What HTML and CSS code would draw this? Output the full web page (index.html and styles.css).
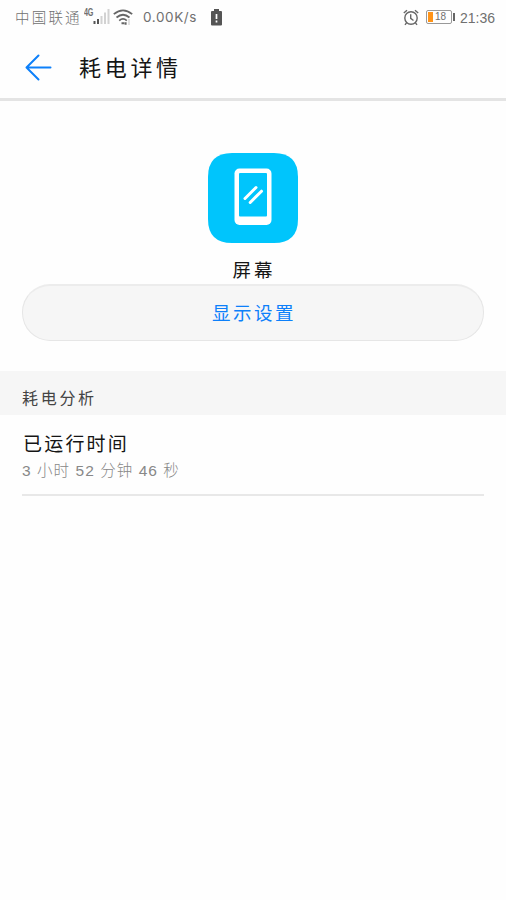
FILE: index.html
```html
<!DOCTYPE html>
<html lang="zh-CN">
<head>
<meta charset="utf-8">
<title>耗电详情</title>
<link rel="stylesheet" href="styles.css">
</head>
<body>
<div class="status">
  <span class="carrier">中国联通</span>
  <span class="network">4G</span>
  <svg class="signal" width="18" height="17" viewBox="0 0 18 17">
    <path d="M1.5 13v3M5 11v5" stroke="#555" stroke-width="2"/>
    <path d="M8.500 8v8M12 4.500v11.500M15.500 1v15" stroke="#d2d2d2" stroke-width="2"/>
  </svg>
  <svg class="wifi" width="20" height="17" viewBox="0 0 20 17" fill="none" stroke="#666" stroke-width="1.7">
    <path d="M.8 5.200Q10-2.600 19.200 5.200M3.500 8.500Q10 3 16.500 8.500M6.200 11.600Q10 8.300 13.800 11.600"/>
    <path d="M8.500 14.300h2.800M12.600 13.200v2.500" stroke-width="2"/>
    <path d="M16 10v6" stroke="#ddd"/>
  </svg>
  <span class="speed">0.00K/s</span>
  <svg class="low" width="11" height="17" viewBox="0 0 11 17">
    <path d="M3 0h5v2h2q1 0 1 1v12.500q0 1-1 1H1q-1 0-1-1V3q0-1 1-1h2z" fill="#555"/>
    <path d="M5.500 5v5M5.500 11.500v2" stroke="#fff" stroke-width="1.700"/>
  </svg>
  <svg class="alarm" width="16" height="17" viewBox="0 0 16 17" fill="none" stroke="#666" stroke-width="1.400">
    <circle cx="8" cy="9" r="6.200"/>
    <path d="M7.700 5.300v4l2.800 2.200M.8 4L4 1.200M12 1.200L15.200 4M3.500 13.800L2 15.800M12.500 13.800l1.500 2"/>
  </svg>
  <span class="battery"><i class="charge"></i><span>18</span></span>
  <i class="cap"></i>
  <span class="clock">21:36</span>
</div>
<header class="bar">
  <svg width="27" height="27" viewBox="0 0 27 27" fill="none" stroke="#0d80fa" stroke-width="2" stroke-linecap="round" stroke-linejoin="round">
    <path d="M13.500 1.500L1.500 13.500l12 12M1.500 13.500h24"/>
  </svg>
  <h1>耗电详情</h1>
</header>
<main>
  <section class="app">
    <svg width="90" height="90" viewBox="0 0 90 90">
      <path d="M0 24Q0 0 24 0H66Q90 0 90 24V66Q90 90 66 90H24Q0 90 0 66Z" fill="#00c5fc"/>
      <rect x="26.500" y="15.500" width="37" height="56.500" rx="5" fill="#fff"/>
      <rect x="31" y="20" width="28" height="43.500" rx="1" fill="#00c5fc"/>
      <path d="M37 45.500L48 34.500M42.200 49.500L53.500 38.200" stroke="#fff" stroke-width="3" stroke-linecap="round"/>
    </svg>
    <div class="name">屏幕</div>
    <div class="settings">显示设置</div>
  </section>
  <h2>耗电分析</h2>
  <div class="row">
    <div class="row-title">已运行时间</div>
    <div class="row-value">3 小时 52 分钟 46 秒</div>
  </div>
</main>
</body>
</html>
```
FILE: styles.css
```css
* { box-sizing: border-box; }
body {
  margin: 0;
  min-height: 900px;
  background: #fefefe;
  color: #151515;
  font-family: "Liberation Sans", "Noto Sans CJK SC", sans-serif;
}
svg { display: block; flex: none; }
.status {
  display: flex;
  align-items: center;
  height: 34px;
  padding-left: 15px;
  color: #707070;
  font-size: 14px;
  line-height: 34px;
  white-space: nowrap;
}
.carrier { width: 69px; padding-top: 1px; font-size: 14.5px; letter-spacing: 2.2px; font-weight: 300; }
.network { width: 9px; font: bold 10px/10px "Liberation Sans", sans-serif; letter-spacing: -.3px; transform: scaleX(.72); transform-origin: left; margin-top: -8px; }
.signal { margin-top: -1px; }
.wifi { margin-left: 2px; }
.speed { width: 68px; margin-left: 10px; font-family: Inter, "Liberation Sans", sans-serif; font-size: 13.5px; font-weight: 400; letter-spacing: .6px; }
.alarm { margin-left: auto; }
.battery {
  display: flex;
  align-items: center;
  width: 26px;
  height: 14px;
  margin-left: 7px;
  padding: 1px;
  border: 1px solid #999;
  border-radius: 2px;
  font-size: 10px;
  line-height: 12px;
}
.charge { width: 5px; height: 10px; margin-right: 2px; background: #ff9419; }
.cap { width: 2px; height: 8px; margin-left: 1px; background: #666; }
.clock { width: 46px; margin-left: 5px; padding-top: 1px; }
.bar {
  display: flex;
  align-items: center;
  height: 67px;
  padding: 2px 0 0 25px;
  border-bottom: 3px solid #e4e4e4;
}
.bar h1 {
  margin: 0 0 0 27px;
  padding-top: 4px;
  font-size: 22px;
  font-weight: 400;
  line-height: 32px;
  letter-spacing: 3.7px;
}
.app {
  display: flex;
  flex-direction: column;
  align-items: center;
  padding: 52px 22px 30px;
}
.name {
  height: 41px;
  padding-top: 13px;
  font-size: 18.5px;
  line-height: 30px;
  letter-spacing: 3px;
  text-indent: 2px;
}
.settings {
  width: 100%;
  height: 57px;
  border: 1px solid #e6e6e6;
  border-top: 2px solid #ececec;
  border-radius: 28px;
  background: #f6f6f6;
  color: #0d80fa;
  font-size: 18.5px;
  line-height: 55px;
  letter-spacing: 2.5px;
  text-indent: 2px;
  text-align: center;
}
h2 {
  height: 44px;
  margin: 0;
  padding: 7px 22px 0;
  background: #f6f6f6;
  color: #444;
  font-size: 16px;
  font-weight: 400;
  line-height: 42px;
  letter-spacing: 2.7px;
}
.row {
  height: 81px;
  margin: 0 22px;
  padding-top: 16px;
  border-bottom: 2px solid #e8e8e8;
}
.row-title { padding-left: 1px; font-size: 19px; line-height: 28px; letter-spacing: 2.2px; }
.row-value { color: #888; font-size: 15.5px; font-weight: 300; line-height: 24px; letter-spacing: 1.05px; white-space: nowrap; }
```
